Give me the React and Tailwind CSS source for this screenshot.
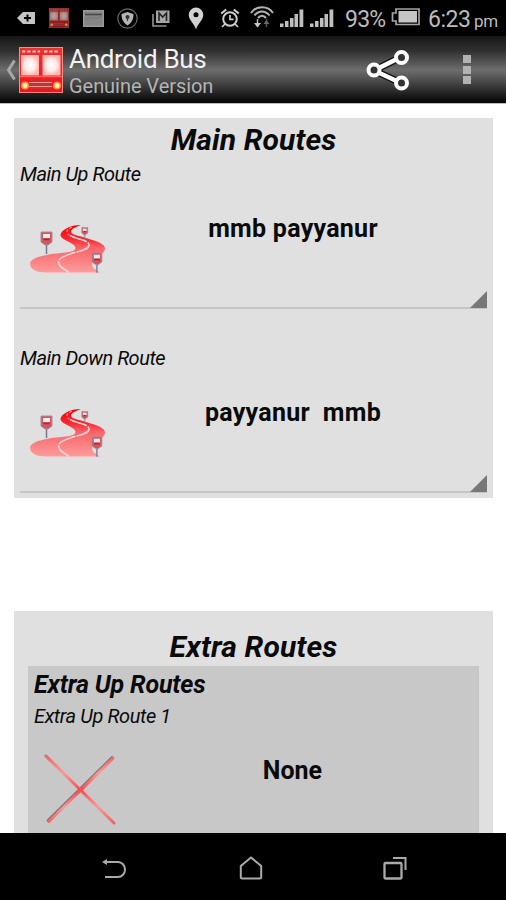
const BusIcon = ({ className }) => (
  <svg viewBox="0 0 44 46" preserveAspectRatio="none" className={className}>
    <defs>
      <radialGradient id="busGlass">
        <stop offset="0" stopColor="#fff" />
        <stop offset="0.55" stopColor="#ffeceb" />
        <stop offset="1" stopColor="#ffb5b1" />
      </radialGradient>
      <linearGradient id="busBody" x1="0" y1="0" x2="0" y2="1">
        <stop offset="0" stopColor="#e83232" />
        <stop offset="1" stopColor="#f3131c" />
      </linearGradient>
    </defs>
    <rect x="0.5" y="0.5" width="43" height="45" fill="url(#busBody)" stroke="#ff8a85" />
    <path d="M3 4.5h18M25 4.5h15" stroke="#ffc4c0" strokeWidth="2.2" strokeDasharray="3.4 1.8" />
    <rect x="2" y="8" width="18" height="20.5" rx="1" fill="url(#busGlass)" />
    <rect x="23.5" y="8" width="18" height="20.5" rx="1" fill="url(#busGlass)" />
    <path d="M1 29.5h42" stroke="#ff615c" strokeWidth="1.5" />
    <rect x="10" y="33.5" width="23" height="8" rx="1" fill="#b9363a" />
    <path d="M10 35.5h23M10 39.5h23" stroke="#ed9a92" />
    <circle cx="6" cy="38.5" r="4" fill="#fb8b50" />
    <circle cx="38" cy="38.5" r="4" fill="#fb8b50" />
    <circle cx="6" cy="38.5" r="2.5" fill="#fff799" />
    <circle cx="38" cy="38.5" r="2.5" fill="#fff799" />
  </svg>
);

const SignalIcon = ({ className }) => (
  <svg viewBox="0 0 24 20" className={className} fill="#c0c0c0">
    <path d="M0 16.500h3.500v3.500H0zM5 14h3.500v6H5zM10 11h3.500v9H10zM14.500 7H18v13h-3.500zM19.500 2.500h3.800V20h-3.800z" />
  </svg>
);

const StatusBar = () => (
  <div className="h-9 bg-black flex items-center text-[#bcbcbc]">
    <svg viewBox="0 0 18 14" className="w-[18px] h-3.5 ml-[17px]">
      <path d="M0 7l6-6h12v12H6z" fill="#c4c4c4" />
      <path d="M10.500 3.500v7M7 7h7" stroke="#000" strokeWidth="2" />
    </svg>
    <BusIcon className="w-5 h-5 ml-3.5 opacity-65" />
    <svg viewBox="0 0 21 17" className="w-[21px] h-[17px] ml-3.5">
      <rect x="0.75" y="0.75" width="19.500" height="15.500" fill="#858585" stroke="#999" strokeWidth="1.500" />
      <path d="M2 4.500h17" stroke="#444" strokeWidth="1.500" />
      <path d="M2 9l7-1.500 4 1 6-2" stroke="#777" fill="none" />
    </svg>
    <svg viewBox="0 0 21 21" className="w-[21px] h-[21px] ml-[13px]" fill="none">
      <circle cx="10.500" cy="10.500" r="9.700" stroke="#686868" strokeWidth="1.200" />
      <path d="M10.500 4l6 2c0 5-1.500 8.500-6 11.500-4.500-3-6-6.500-6-11.500z" fill="#b5b5b5" />
      <circle cx="10.500" cy="9" r="2" fill="#333" />
      <path d="M10.500 9v4" stroke="#333" strokeWidth="1.300" />
    </svg>
    <svg viewBox="0 0 18 17" className="w-[18px] h-[17px] ml-3.5" fill="none">
      <path d="M1 4v12h13.500" stroke="#959595" strokeWidth="1.600" />
      <rect x="4" y="0.500" width="13.500" height="12.500" fill="#a5a5a5" />
      <path d="M7 11V3l3.700 4L14.500 3v8" stroke="#222" strokeWidth="1.600" />
    </svg>
    <svg viewBox="0 0 16 23" className="w-4 h-[23px] ml-[18px]">
      <path fillRule="evenodd" d="M8 0.500A7.300 7.300 0 0 0 .7 7.800C.7 13 6.500 17 8 22.500 9.500 17 15.300 13 15.300 7.800A7.300 7.300 0 0 0 8 .5zM8 5.300a2.500 2.500 0 1 1 0 5 2.500 2.500 0 0 1 0-5z" fill="#d2d2d2" />
    </svg>
    <svg viewBox="0 0 20 20" className="w-5 h-5 ml-4" fill="none" stroke="#cecece">
      <circle cx="10" cy="11" r="6.800" strokeWidth="2" />
      <path d="M1.200 5.500l5-4M18.800 5.500l-5-4" strokeWidth="2.200" />
      <path d="M10 7v4.300h3.500M5 16l-3 3M15 16l3 3" strokeWidth="1.700" />
    </svg>
    <svg viewBox="0 0 24 23" className="w-6 h-[23px] ml-2.5 -mt-1" fill="none" stroke="#b4b4b4">
      <path d="M1 8C6 .2 18 .2 23 8M4.500 10.500c4-5.500 11-5.500 15 0M8 13c2.500-3 5.500-3 8 0" strokeWidth="2" />
      <path d="M7.500 22v-8" strokeWidth="1.500" />
      <path d="M4 18h7L7.500 22.500z" fill="#c8c8c8" stroke="none" />
      <path d="M16.500 14v8" stroke="#555" strokeWidth="1.500" />
      <path d="M13.500 19h6L16.500 15z" fill="#666" stroke="none" />
    </svg>
    <SignalIcon className="w-6 h-5 ml-1.5 -mt-0.5" />
    <SignalIcon className="w-6 h-5 ml-1.5 -mt-0.5" />
    <span className="w-[41px] ml-[11px] text-[23px] leading-9 tracking-[-0.8px] pt-[3px]">93%</span>
    <svg viewBox="0 0 29 18" className="w-[29px] h-[18px] ml-[5px] -mt-0.5" fill="none">
      <path d="M5 1h23v15.500H5v-3.500H1.500V5H5z" stroke="#a5a5a5" strokeWidth="1.700" />
      <rect x="7.500" y="3" width="18.500" height="11.500" fill="#c4c4c4" />
    </svg>
    <span className="w-[44px] ml-2 text-[23px] leading-9 tracking-[-0.5px] pt-[3px]">6:23</span>
    <span className="ml-0.5 text-[17px] leading-9 pt-[5px] tracking-[-0.4px]">pm</span>
  </div>
);

const ActionBar = () => (
  <header className="h-[67px] flex items-center bg-[linear-gradient(to_bottom,#171717_0%,#303030_22%,#6d6d6d_51%,#494949_68%,#080808_98%)]">
    <svg viewBox="0 0 10 22" className="w-2.5 h-[22px] ml-1.5" fill="none">
      <path d="M8.500 1.500L2.500 11l6 9.500" stroke="#a8a8a8" strokeWidth="3" />
    </svg>
    <BusIcon className="w-11 h-[46px] ml-[3px]" />
    <div className="ml-1.5 w-[240px] pt-0.5">
      <div className="text-[26px] leading-[30px] tracking-[-0.3px] text-[#f2f2f2]">Android Bus</div>
      <div className="text-[20px] leading-6 tracking-[-0.05px] text-[#b4b4b4]">Genuine Version</div>
    </div>
    <svg viewBox="0 0 46 44" className="w-[46px] h-11 ml-[56px]" fill="none">
      <g stroke="#111" strokeWidth="7">
        <path d="M36 9L9 22.500 36 35" />
      </g>
      <g stroke="#fff" strokeWidth="4">
        <path d="M36 9L9 22.500 36 35" strokeWidth="4.500" />
        <g fill="#333">
          <circle cx="36.500" cy="9.500" r="5.500" />
          <circle cx="9" cy="22" r="5.500" />
          <circle cx="36.500" cy="35" r="5.500" />
        </g>
      </g>
    </svg>
    <div className="ml-[52px] flex flex-col gap-[2.500px]">
      <i className="block size-[8px] bg-[#b2b2b2]" />
      <i className="block size-[8px] bg-[#b2b2b2]" />
      <i className="block size-[8px] bg-[#b2b2b2]" />
    </div>
  </header>
);

const Sign = ({ x, y, s }) => (
  <g transform={`translate(${x} ${y}) scale(${s})`}>
    <path d="M6 12v11" stroke="#77779c" strokeWidth="1.500" />
    <path d="M.5 1h11v10L7.500 14h-3L.5 11z" fill="#cb5963" stroke="#a98b9d" />
    <rect x="2.500" y="3" width="7" height="4" fill="#ffe9e9" />
    <path d="M3 8.500h6" stroke="#cf1526" strokeWidth="1.500" />
  </g>
);

const RoadIcon = () => (
  <svg viewBox="0 0 76 49" className="w-[76px] h-[49px]">
    <defs>
      <linearGradient id="road" x1="0" y1="0" x2="0" y2="1">
        <stop offset="0" stopColor="#f50008" />
        <stop offset="0.28" stopColor="#f7252d" />
        <stop offset="0.48" stopColor="#f86468" />
        <stop offset="1" stopColor="#fd9c9c" />
      </linearGradient>
    </defs>
    <path
      d="M51 0C40 0 31 5 30.500 10c0 5 15 8 15 13S33 27 19 29.500C5 32 0 35 0 39 0 44 7 47.500 16 47.500h54c-7-4-8-6-8-9 1-6 13-9 13-15 0-6-12-8-22-11.500C45 10 41 9 41 6.500 41 4 46 2 51 0z"
      fill="url(#road)"
    />
    <path
      d="M42 2c-6 3-7 6-2 8.500"
      fill="none"
      stroke="#ff8a8a"
      strokeWidth="1.200"
      strokeDasharray="3 1.500"
    />
    <path
      d="M40 10.500c7 4 19 4.500 19 9.500 0 5-10 6-19 9-10 3.500-14 6.500-10 11.500 1 2 5 4 9 7"
      fill="none"
      stroke="#fbd0d0"
      strokeWidth="1.700"
      strokeDasharray="18 1.200"
    />
    <Sign x={10.500} y={6} s={1} />
    <Sign x={51.500} y={2} s={0.55} />
    <Sign x={61.500} y={27} s={0.9} />
  </svg>
);

const CrossIcon = () => (
  <svg viewBox="0 0 74 72" className="w-[74px] h-[72px]" fill="none" strokeLinecap="round">
    <defs>
      <linearGradient id="cross" gradientUnits="userSpaceOnUse" x1="0" y1="2" x2="0" y2="70">
        <stop offset="0" stopColor="#ef6666" />
        <stop offset="0.25" stopColor="#fa9999" />
        <stop offset="0.5" stopColor="#fb4b50" />
        <stop offset="0.75" stopColor="#fa9999" />
        <stop offset="1" stopColor="#f26060" />
      </linearGradient>
    </defs>
    <path d="M1.800 1.800l4 4M68.200 3.300L4 66.500" stroke="#777" strokeWidth="2.600" />
    <path d="M2.500 2.500l67.500 66.500M69 4.300L5 67.500" stroke="url(#cross)" strokeWidth="3" />
  </svg>
);

const RouteSpinner = ({ label, value }) => (
  <div className="mx-1.5">
    <div className="h-6 text-[20px] leading-6 italic tracking-[-0.47px]">{label}</div>
    <div className="relative h-[123px] flex items-start border-b-2 border-[#c5c5c5]">
      <div className="ml-2.5 mt-[39px] w-[76px]">
        <RoadIcon />
      </div>
      <div className="mt-7 flex-1 pr-[7px] text-center text-[25px] leading-[30px] tracking-[0.27px] font-bold whitespace-pre">
        {value}
      </div>
      <svg viewBox="0 0 17 17" className="absolute right-0 -bottom-px w-[17px] h-[17px]">
        <path d="M17 0v17H0z" fill="#777" />
      </svg>
    </div>
  </div>
);

const NavBar = () => (
  <nav className="h-[67px] bg-black flex items-center">
    <svg viewBox="0 0 26 24" className="w-[26px] h-6 ml-[102px] mt-1" fill="none" stroke="#aaa" strokeWidth="2">
      <path d="M3 5h13c4 0 7 3.500 7 7.500S20 20 16 20H3" />
      <path d="M0 5l5-3v6z" fill="#aaa" stroke="none" />
    </svg>
    <svg viewBox="0 0 24 24" className="w-6 h-6 ml-[111px] mt-0.5" fill="none" stroke="#aaa" strokeWidth="2">
      <path d="M12 1.500l10.200 8.500v11q0 1.500-1.500 1.500H3.300q-1.500 0-1.500-1.500V10z" />
    </svg>
    <svg viewBox="0 0 24 24" className="w-6 h-6 ml-[120px] mt-0.5" fill="none" stroke="#aaa" strokeWidth="2">
      <rect x="1.500" y="7" width="17" height="15.500" rx="1" strokeWidth="2.300" />
      <path d="M10 2h12.500v12" />
    </svg>
  </nav>
);

const App = () => (
  <div className="w-[506px] h-[900px] flex flex-col overflow-hidden bg-white text-[#0a0a0a] font-['Roboto',sans-serif]">
    <StatusBar />
    <ActionBar />
    <main className="flex-1 min-h-0 overflow-hidden pt-[15px] pl-3.5 pr-[13px] border-t border-[#bbb]">
      {/* Main routes */}
      <section className="h-[380px] -mt-px bg-[#e0e0e0]">
        <h2 className="h-11 text-center text-[30px] leading-[44px] tracking-[0.12px] font-bold italic">Main Routes</h2>
        <RouteSpinner label="Main Up Route" value="mmb payyanur" />
        <div className="h-[37px]" />
        <RouteSpinner label="Main Down Route" value="payyanur  mmb" />
      </section>

      {/* Extra routes */}
      <section className="mt-[113px] h-[400px] px-3.5 pt-3.5 bg-[#e0e0e0]">
        <h2 className="h-[41px] text-center text-[30px] leading-[44px] tracking-[0.15px] font-bold italic">Extra Routes</h2>
        <div className="h-[340px] bg-[#c8c8c8] pl-1.5">
          <h3 className="h-[38px] text-[25px] leading-[38px] tracking-[-0.17px] font-bold italic">Extra Up Routes</h3>
          <div className="h-6 text-[20px] leading-6 italic tracking-[-0.4px]">Extra Up Route 1</div>
          <div className="flex items-start">
            <div className="ml-2.5 mt-[26px]">
              <CrossIcon />
            </div>
            <div className="mt-7 flex-1 pr-3 text-center text-[25px] leading-[30px] font-bold">None</div>
          </div>
        </div>
      </section>
    </main>
    <NavBar />
  </div>
);

export default App;
